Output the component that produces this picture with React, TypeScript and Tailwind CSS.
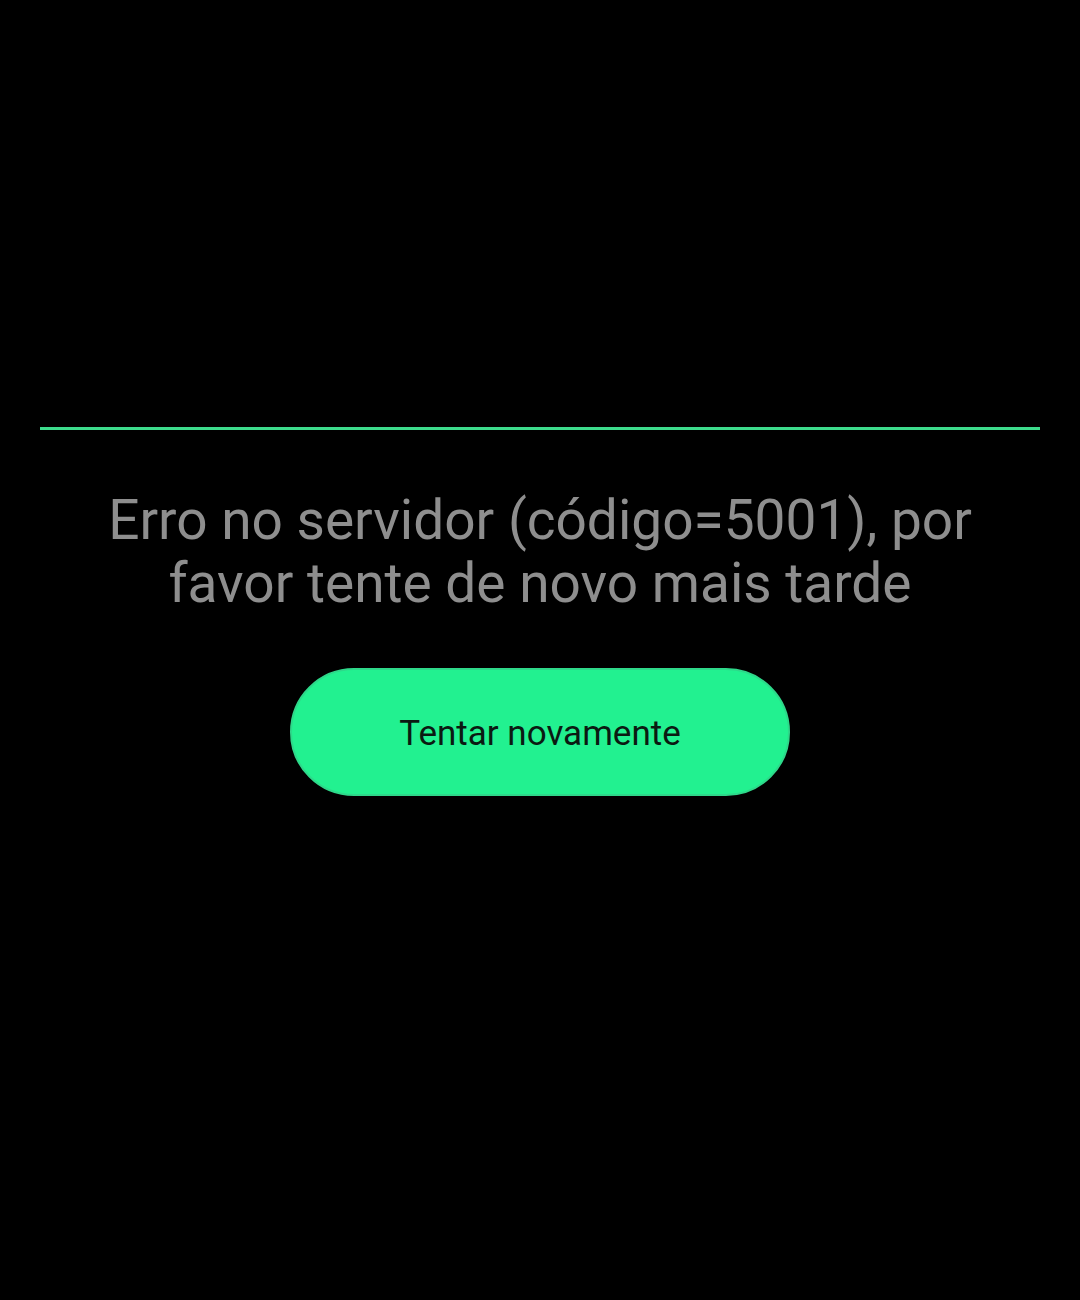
export default function App() {
  return (
    <div className="min-h-[1300px] w-full bg-black flex flex-col items-center pt-[427px]" style={{ fontFamily: "Roboto, 'Noto Sans', sans-serif" }}>
      <div className="w-[1000px] h-[3px] bg-[#3ddc8c]" />
      <p className="mt-[59px] w-[900px] text-center text-[55px] leading-[63px] text-[#8e8e8e]">
        Erro no servidor (código=5001), por favor tente de novo mais tarde
      </p>
      <button className="mt-[53px] w-[500px] h-[128px] rounded-full bg-[#22f190] border-2 border-[#2ed88a] text-[35px] text-[#0b1a12] flex items-center justify-center pt-[4px]">
        Tentar novamente
      </button>
    </div>
  );
}
